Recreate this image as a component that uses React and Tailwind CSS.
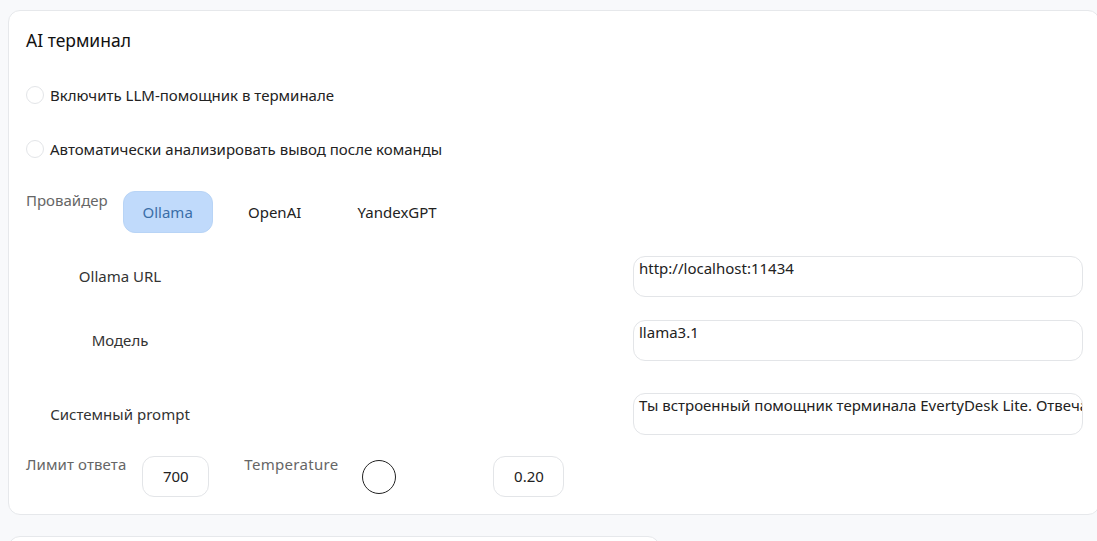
import React from 'react'

const font = { fontFamily: '"Noto Sans", "Open Sans", sans-serif' }

function Check({ label }) {
  return (
    <label className="flex items-center gap-[6px] h-6 text-[15px] text-[#222]">
      <span className="w-[18px] h-[18px] rounded-full border border-[#e3e5e8] bg-white" />
      {label}
    </label>
  )
}

function Field({ label, value, h = 'h-[41px]' }) {
  return (
    <div className="flex items-center justify-between">
      <div className="w-[188px] text-center text-[15px] text-[#333]">{label}</div>
      <div className={`w-[450px] ${h} rounded-xl border border-[#e3e5e8] bg-white pl-[5px] text-[15px] leading-[22px] text-[#222] overflow-hidden whitespace-nowrap`}>
        {value}
      </div>
    </div>
  )
}

export default function App() {
  return (
    <div className="h-screen bg-[#f8f9fb] pt-[10px] overflow-hidden" style={font}>
      <div className="ml-2 w-[1092px] rounded-xl border border-[#e6e8eb] bg-white pl-[17px] pr-[16px] pt-[17px] pb-[17px]">
        <h2 className="h-6 leading-6 text-[17.5px] text-[#111]">AI терминал</h2>

        <div className="mt-[31px] flex flex-col gap-[30px]">
          <Check label="Включить LLM-помощник в терминале" />
          <Check label="Автоматически анализировать вывод после команды" />
        </div>

        <div className="mt-[30px] flex items-start gap-[15px]">
          <span className="mt-[-1px] text-[15px] leading-5 text-[#666]">Провайдер</span>
          <div className="flex gap-4">
            <button className="h-[42px] w-[90px] rounded-xl border border-[#b8d4f6] bg-[#c0dafb] text-[15px] text-[#3a6ea8]">Ollama</button>
            <button className="h-[42px] w-[92px] rounded-xl text-[15px] text-[#222]">OpenAI</button>
            <button className="h-[42px] w-[121px] rounded-xl text-[15px] text-[#222]">YandexGPT</button>
          </div>
        </div>

        <div className="mt-[23px] flex flex-col">
          <Field label="Ollama URL" value="http://localhost:11434" />
          <div className="mt-[23px]">
            <Field label="Модель" value="llama3.1" />
          </div>
          <div className="mt-[32px]">
            <Field label="Системный prompt" value="Ты встроенный помощник терминала EvertyDesk Lite. Отвечай кратко и по делу." h="h-[42px]" />
          </div>
        </div>

        <div className="mt-[21px] flex items-start">
          <span className="mt-[-2px] text-[15px] leading-5 text-[#666] tracking-[0.1px]">Лимит ответа</span>
          <div className="ml-[16px] flex h-[41px] w-[67px] items-center justify-center rounded-xl border border-[#e3e5e8] text-[15px] text-[#222]">700</div>
          <span className="ml-[35px] mt-[-2px] text-[15px] leading-5 text-[#666] tracking-[0.3px]">Temperature</span>
          <div className="ml-6 flex h-[41px] w-[116px] items-center">
            <span className="block h-[34px] w-[34px] rounded-full border-[1.5px] border-[#222] bg-white" />
          </div>
          <div className="ml-[15px] flex h-[41px] w-[71px] items-center justify-center rounded-xl border border-[#e3e5e8] text-[15px] text-[#222]">0.20</div>
        </div>
      </div>

      <div className="ml-2 mt-[21px] h-10 w-[652px] rounded-xl border border-[#e6e8eb] bg-white" />
    </div>
  )
}
